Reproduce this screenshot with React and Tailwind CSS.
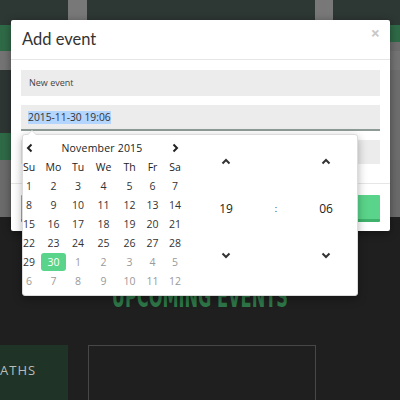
import React from "react";

const F = { fontFamily: '"Open Sans", "DejaVu Sans", sans-serif' };

function Up() {
  return (
    <svg width="10" height="7" viewBox="0 0 10 7">
      <polyline points="1.5,5.5 5,2 8.5,5.5" fill="none" stroke="#333" strokeWidth="2" />
    </svg>
  );
}
function Down() {
  return (
    <svg width="10" height="7" viewBox="0 0 10 7">
      <polyline points="1.5,1.5 5,5 8.5,1.5" fill="none" stroke="#333" strokeWidth="2" />
    </svg>
  );
}
function Left() {
  return (
    <svg width="7" height="10" viewBox="0 0 7 10">
      <polyline points="5.5,1.5 2,5 5.5,8.5" fill="none" stroke="#222" strokeWidth="2" />
    </svg>
  );
}
function Right() {
  return (
    <svg width="7" height="10" viewBox="0 0 7 10">
      <polyline points="1.5,1.5 5,5 1.5,8.5" fill="none" stroke="#222" strokeWidth="2" />
    </svg>
  );
}

const weeks = [
  [[1, 1], [2, 1], [3, 1], [4, 1], [5, 1], [6, 1], [7, 1]],
  [[8, 1], [9, 1], [10, 1], [11, 1], [12, 1], [13, 1], [14, 1]],
  [[15, 1], [16, 1], [17, 1], [18, 1], [19, 1], [20, 1], [21, 1]],
  [[22, 1], [23, 1], [24, 1], [25, 1], [26, 1], [27, 1], [28, 1]],
  [[29, 1], [30, 2], [1, 0], [2, 0], [3, 0], [4, 0], [5, 0]],
  [[6, 0], [7, 0], [8, 0], [9, 0], [10, 0], [11, 0], [12, 0]],
];
const dows = ["Su", "Mo", "Tu", "We", "Th", "Fr", "Sa"];
const gridCols = "grid grid-cols-[19px_25px_24px_27px_25px_21px_24px]";

export default function App() {
  return (
    <div className="relative w-[400px] h-[400px] overflow-hidden bg-[#1e1f1e]" style={F}>
      {/* background page */}
      <div className="flex h-[25px] bg-[#2d3734]">
        <div className="ml-[68px] w-[19px] bg-[#787878]" />
        <div className="ml-[228px] w-[18px] bg-[#787878]" />
      </div>
      <div className="flex h-[26px] bg-[#2f6a47]">
        <div className="flex-1" />
        <div className="w-[10px] flex flex-col">
          <div className="h-[17px]" />
          <div className="flex-1 bg-[#6e6e6e]" />
        </div>
      </div>
      <div className="flex h-[19px] bg-[#747474]" />
      <div className="flex h-[63px] bg-[#2e3634]">
        <div className="flex-1" />
        <div className="w-[10px] bg-[#6e6e6e]" />
      </div>
      <div className="flex h-[27px] bg-[#2f6a47]">
        <div className="flex-1" />
        <div className="w-[10px] bg-[#6e6e6e]" />
      </div>
      <div className="h-[57px] bg-[#6b6b6b]" />
      <div className="flex flex-col items-center pt-[66px]">
        <div
          className="text-[30px] leading-[28px] font-bold text-[#2e7748] scale-x-[0.6] whitespace-nowrap"
          style={{ fontFamily: '"DejaVu Sans Condensed", "DejaVu Sans", sans-serif' }}
        >
          UPCOMING EVENTS
        </div>
      </div>
      <div className="flex mt-[34px]">
        <div className="w-[68px] h-[60px] bg-[#1f3326] pt-[17px] text-[13px] leading-[16px] tracking-[1px] text-[#b9bdb9] text-right pr-[38px]">
          ATHS
        </div>
        <div className="ml-[20px] w-[228px] h-[60px] border border-[#474747]" />
      </div>

      {/* modal */}
      <div className="absolute left-[11px] top-[20px] w-[379px] h-[211px] bg-white rounded-[2px] shadow-[0_2px_8px_rgba(0,0,0,0.4)] flex flex-col">
        <div className="relative h-[40px] border-b border-[#e6e6e6] pl-[11px] pt-[8px]">
          <div className="text-[16.5px] leading-[22px] text-[#333]" style={{ fontFamily: 'Lato, "Open Sans", sans-serif' }}>Add event</div>
          <div className="absolute right-[10px] top-[5px] text-[16px] leading-[16px] font-bold text-[#c8c8c8]">×</div>
        </div>
        <div className="px-[10px] pt-[10px] flex flex-col">
          <div className="h-[26px] bg-[#ececec] pl-[8px] flex items-center text-[9px] text-[#444]">New event</div>
          <div className="mt-[9px] h-[26px] bg-[#ececec] border-b-2 border-[#8e9a96] pl-[7px] flex items-center text-[10.3px] text-[#333]">
            <span className="bg-[#b4d5fe] leading-[13px]">2015-11-30 19:06</span>
          </div>
          <div className="mt-[9px] h-[24px] bg-[#ececec]" />
        </div>
        <div className="mt-[19px] border-t border-[#e6e6e6] px-[10px] pt-[11px]">
          <div className="h-[27px] bg-[#5ad48a] border-b-[3px] border-[#3eb26b] rounded-[1px]" />
        </div>
      </div>

      {/* datetime popup */}
      <div className="absolute left-[22px] top-[134px] w-[336px] h-[162px] bg-white rounded-[3px] border border-[#dcdcdc] shadow-[0_3px_10px_rgba(0,0,0,0.3)] flex pt-[3px]">
        <div className="absolute -top-[5px] left-[4px] w-0 h-0 border-l-[5px] border-r-[5px] border-b-[5px] border-l-transparent border-r-transparent border-b-[#dcdcdc]" />
        <div className="absolute -top-[4px] left-[5px] w-0 h-0 border-l-[4px] border-r-[4px] border-b-[4px] border-l-transparent border-r-transparent border-b-white" />
        <div className="-ml-px flex flex-col text-[10.5px] leading-[14px] text-[#333]">
          <div className={`${gridCols} h-[19px] items-center`}>
            <div className="flex justify-center pr-[5px]"><Left /></div>
            <div className="col-span-5 text-center text-[10.5px] text-[#222] tracking-[0.2px]">November 2015</div>
            <div className="flex justify-center"><Right /></div>
          </div>
          <div className={`${gridCols} h-[19px] items-center text-[#222]`}>
            {dows.map((d, i) => (
              <div key={d} className={`text-center ${i === 0 ? "pr-[5px]" : ""}`}>{d}</div>
            ))}
          </div>
          {weeks.map((w, wi) => (
            <div key={wi} className={`${gridCols} h-[19px] items-center`}>
              {w.map(([n, t], i) =>
                t === 2 ? (
                  <div key={i} className="flex justify-center">
                    <div className="w-[26px] h-[18px] rounded-[3px] bg-[#5ad48a] text-white flex items-center justify-center">{n}</div>
                  </div>
                ) : (
                  <div key={i} className={`text-center ${i === 0 ? "pr-[5px]" : ""} ${t === 0 ? "text-[#9a9a9a]" : "text-[#333]"}`}>{n}</div>
                )
              )}
            </div>
          ))}
        </div>
        <div className="ml-[14px] grid grid-cols-[50px_50px_50px] grid-rows-[47px_47px_47px] text-[12px] text-[#222]">
          <div className="flex items-center justify-center"><Up /></div>
          <div />
          <div className="flex items-center justify-center"><Up /></div>
          <div className="flex items-center justify-center">19</div>
          <div className="flex items-center justify-center text-[9px]">:</div>
          <div className="flex items-center justify-center">06</div>
          <div className="flex items-center justify-center"><Down /></div>
          <div />
          <div className="flex items-center justify-center"><Down /></div>
        </div>
      </div>
    </div>
  );
}
